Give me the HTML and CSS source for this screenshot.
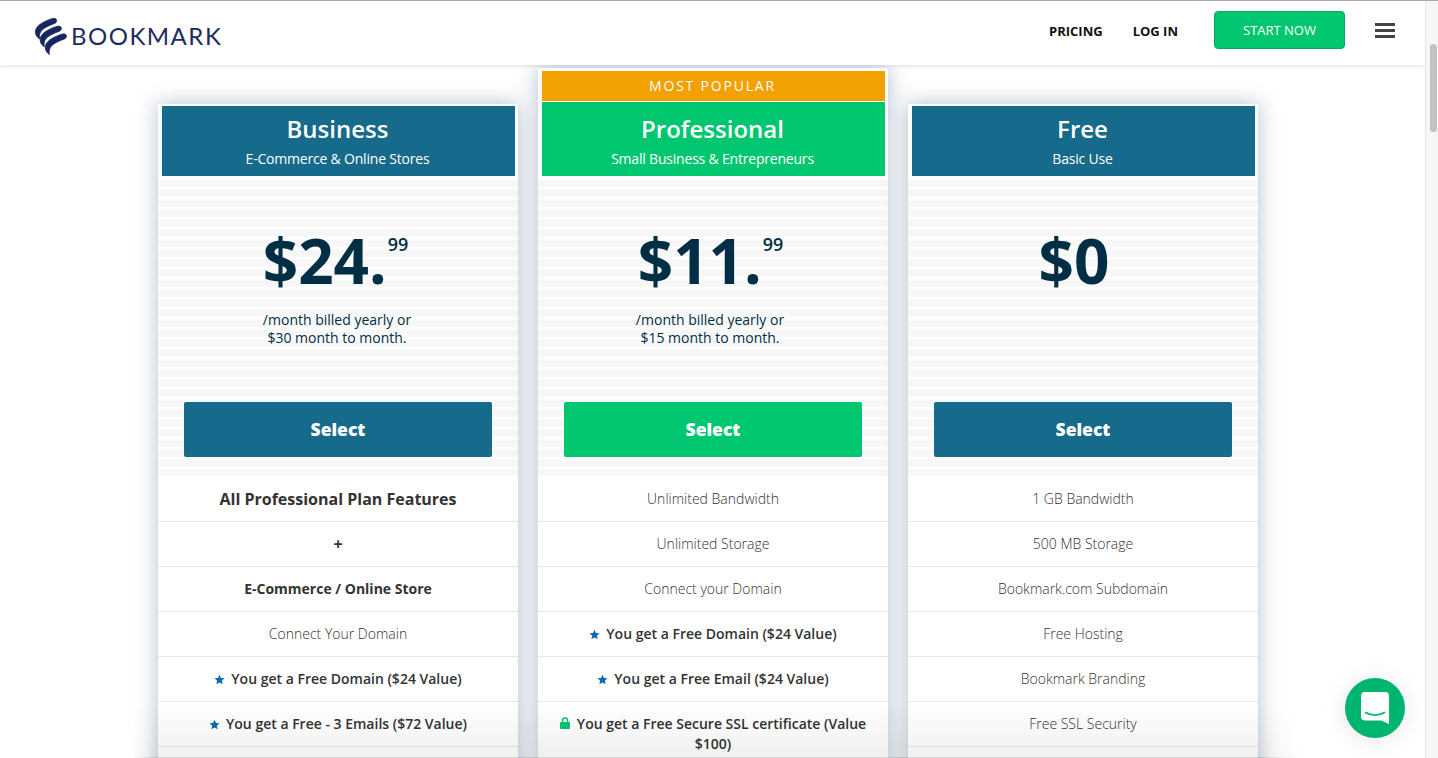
FILE: index.html
```html
<!DOCTYPE html>
<html lang="en">
<head>
    <meta charset="UTF-8">
    <meta name="viewport" content="width=device-width, initial-scale=1.0">
    <title>Bookmark Pricing</title>
    <link rel="stylesheet" href="styles.css">
</head>
<body>
    <svg class="icon-defs" width="0" height="0">
        <symbol id="star" viewBox="0 0 24 24"><path d="M12 1.500l3.200 7.200 7.800.8-5.900 5.200 1.800 7.800L12 18.400l-6.900 4.100 1.800-7.800L1 9.500l7.800-.8z"/></symbol>
        <symbol id="lock" viewBox="0 0 20 24"><path d="M2 10h1.500V7a6.500 6.500 0 0 1 13 0v3H18a2 2 0 0 1 2 2v10a2 2 0 0 1-2 2H2a2 2 0 0 1-2-2V12a2 2 0 0 1 2-2zm4.500 0h7V7a3.500 3.500 0 0 0-7 0z"/></symbol>
    </svg>
    <div class="window">
        <main class="page">
            <header class="header">
                <a class="logo" href="#">
                    <svg class="logo-mark" width="33" height="37" viewBox="0 0 33 37">
                        <path id="swoosh" d="M.5 14C.5 9 5 6 10 3.500C14 1.500 18 0 20 .5C22.500 1.500 22 4.500 19.500 5.500C14 7.500 8 10 5.500 14C4.500 16 4 18 4.500 21C2 19 .5 17 .5 14z"/>
                        <use href="#swoosh" x="4.700" y="7.800"/>
                        <use href="#swoosh" x="9.800" y="15.500"/>
                    </svg>
                    <span class="logo-text">BOOKMARK</span>
                </a>
                <nav class="nav">
                    <a href="#">PRICING</a>
                    <a href="#">LOG IN</a>
                    <a class="start-btn" href="#">START NOW</a>
                    <span class="burger"><i></i><i></i><i></i></span>
                </nav>
            </header>

            <div class="plans">
                <section class="plan plan-wide">
                    <div class="plan-head">
                        <h2>Business</h2>
                        <p>E-Commerce &amp; Online Stores</p>
                    </div>
                    <div class="plan-price">
                        <div class="price"><span>$24.</span><sup>99</sup></div>
                        <p class="billing">/month billed yearly or<br>$30 month to month.</p>
                        <a class="select-btn" href="#">Select</a>
                    </div>
                    <ul class="features">
                        <li class="lead">All Professional Plan Features</li>
                        <li class="lead">+</li>
                        <li class="strong">E-Commerce / Online Store</li>
                        <li>Connect Your Domain</li>
                        <li class="medium"><svg class="star"><use href="#star"/></svg>You get a Free Domain ($24 Value)</li>
                        <li class="medium"><svg class="star"><use href="#star"/></svg>You get a Free - 3 Emails ($72 Value)</li>
                        <li></li>
                    </ul>
                </section>

                <section class="plan plan-popular">
                    <div class="popular-tag">MOST POPULAR</div>
                    <div class="plan-head green">
                        <h2>Professional</h2>
                        <p>Small Business &amp; Entrepreneurs</p>
                    </div>
                    <div class="plan-price">
                        <div class="price"><span>$11.</span><sup>99</sup></div>
                        <p class="billing">/month billed yearly or<br>$15 month to month.</p>
                        <a class="select-btn green" href="#">Select</a>
                    </div>
                    <ul class="features">
                        <li>Unlimited Bandwidth</li>
                        <li>Unlimited Storage</li>
                        <li>Connect your Domain</li>
                        <li class="medium"><svg class="star"><use href="#star"/></svg>You get a Free Domain ($24 Value)</li>
                        <li class="medium"><svg class="star"><use href="#star"/></svg>You get a Free Email ($24 Value)</li>
                        <li class="medium"><svg class="lock"><use href="#lock"/></svg>You get a Free Secure SSL certificate (Value $100)</li>
                    </ul>
                </section>

                <section class="plan">
                    <div class="plan-head">
                        <h2>Free</h2>
                        <p>Basic Use</p>
                    </div>
                    <div class="plan-price">
                        <div class="price"><span>$0</span><sup class="no-cents"></sup></div>
                        <p class="billing"><br><br></p>
                        <a class="select-btn" href="#">Select</a>
                    </div>
                    <ul class="features">
                        <li>1 GB Bandwidth</li>
                        <li>500 MB Storage</li>
                        <li>Bookmark.com Subdomain</li>
                        <li>Free Hosting</li>
                        <li>Bookmark Branding</li>
                        <li>Free SSL Security</li>
                        <li></li>
                    </ul>
                </section>
            </div>

            <div class="bottom-fade"></div>

            <a class="chat" href="#">
                <svg width="28" height="32" viewBox="0 0 28 32">
                    <path fill="#fff" d="M4 0h20a4 4 0 0 1 4 4v28l-8-3.500H4a4 4 0 0 1-4-4V4a4 4 0 0 1 4-4z"/>
                    <path fill="none" stroke="#00b56f" stroke-width="1.700" stroke-linecap="round" d="M4.500 20.500c5.500 3.500 13.500 3.500 19 0"/>
                </svg>
            </a>
        </main>
        <div class="scrollbar"><div class="thumb"></div></div>
    </div>
</body>
</html>
```

FILE: styles.css
```css
* {
    box-sizing: border-box;
}
html, body {
    margin: 0;
    height: 100%;
    overflow: hidden;
}
body {
    font-family: "Open Sans", Arial, sans-serif;
    color: #333;
    background-color: #fff;
}
a {
    text-decoration: none;
    color: inherit;
}
.icon-defs {
    display: block;
    height: 0;
}
.window {
    display: flex;
    height: 758px;
    border-top: 1px solid #a8a8a8;
}
.page {
    flex: 1;
    position: relative;
    overflow: hidden;
    min-width: 0;
}
.scrollbar {
    width: 13px;
    padding: 43px 1px 0 4px;
    background-color: #f6f6f6;
    border-left: 1px solid #e6e6e6;
}
.thumb {
    height: 88px;
    border-radius: 4px;
    background-color: #c2c2c2;
}

/* header */
.header {
    position: relative;
    z-index: 2;
    height: 64px;
    padding: 0 30px 0 35px;
    display: flex;
    justify-content: space-between;
    align-items: center;
    background-color: #fff;
    box-shadow: 0 1px 4px rgba(0, 0, 0, 0.12);
}
.logo {
    display: flex;
    align-items: center;
    gap: 3px;
    margin-top: 7px;
}
.logo-mark {
    fill: #16275f;
    stroke: #16275f;
    stroke-width: 0.9;
}
.logo-text {
    font-family: Lato, sans-serif;
    font-size: 24px;
    letter-spacing: 1.5px;
    color: #1d2c60;
    margin-top: -3px;
}
.nav {
    display: flex;
    align-items: center;
    font-size: 13px;
    font-weight: 700;
    color: #111;
    margin-top: -4px;
}
.nav a {
    margin-right: 30px;
}
.nav .start-btn {
    margin: -2px 30px 0 6px;
    width: 131px;
    height: 38px;
    line-height: 36px;
    text-align: center;
    font-size: 13px;
    font-weight: 400;
    color: #fff;
    background-color: #00c76f;
    border: 1px solid #08a862;
    border-radius: 4px;
}
.burger {
    display: flex;
    flex-direction: column;
    gap: 3px;
    width: 20px;
    margin-top: -1px;
}
.burger i {
    display: block;
    height: 3px;
    background-color: #444;
}

/* plans */
.plans {
    display: flex;
    align-items: flex-start;
    gap: 20px;
    padding: 39px 0 0 158px;
}
.plan {
    width: 350px;
    background-color: #fff;
    box-shadow: 0 0 20px rgba(50, 85, 130, 0.38);
    padding-top: 2px;
}
.plan-wide {
    width: 360px;
}
.plan-popular {
    margin-top: -36px;
    padding-top: 3px;
}
.popular-tag {
    height: 30px;
    margin: 0 3px 1px 4px;
    padding-right: 2px;
    line-height: 30px;
    text-align: center;
    font-size: 14px;
    letter-spacing: 1.8px;
    color: #fff;
    background-color: #f2a100;
}
.plan-head {
    height: 70px;
    margin: 0 3px 0 4px;
    padding: 6px 2px 0 0;
    text-align: center;
    color: #fff;
    background-color: #166a8b;
}
.plan-head.green {
    height: 74px;
    padding-top: 10px;
    background-color: #00c76f;
}
.plan-head h2 {
    margin: 0;
    font-size: 24px;
    font-weight: 600;
    line-height: 34px;
}
.plan-head p {
    margin: 3px 0 0;
    font-size: 14px;
    letter-spacing: -0.2px;
    line-height: 20px;
}
.plan-price {
    height: 296px;
    margin-top: 4px;
    padding: 43px 26px 0;
    text-align: center;
    background: repeating-linear-gradient(#f7f7f7 0, #f7f7f7 6px, #fff 7.500px, #fff 9px, #f7f7f7 10px);
}
.price {
    display: flex;
    justify-content: center;
    height: 74px;
    font-size: 62px;
    font-weight: 700;
    line-height: 74px;
    color: #002f45;
}
.price sup {
    padding: 0 5px 0 1px;
    font-size: 18px;
    font-weight: 600;
    line-height: 24px;
    margin-top: 9px;
}
.price .no-cents {
    width: 18px;
    padding: 0;
}
.billing {
    margin: 14px 2px 0 0;
    font-size: 14px;
    line-height: 18px;
    color: #002f45;
}
.plan-popular .billing {
    margin-right: 6px;
}
.select-btn {
    display: block;
    height: 55px;
    margin-top: 55px;
    line-height: 55px;
    font-size: 17.500px;
    font-weight: 800;
    color: #fff;
    background-color: #166a8b;
    border-radius: 2px;
}
.select-btn.green {
    background-color: #00c76f;
}

/* feature rows */
.features {
    margin: 0;
    padding: 0;
    list-style: none;
    background-color: #fff;
}
.features li {
    min-height: 45px;
    padding: 12px 20px 10px;
    border-top: 1px solid #e6e7ec;
    text-align: center;
    font-size: 14px;
    font-weight: 300;
    line-height: 20px;
}
.features li:first-child {
    border-top: none;
    padding-top: 13px;
}
.features .lead {
    font-size: 16px;
    font-weight: 700;
}
.features .strong {
    font-weight: 700;
}
.features .medium {
    font-weight: 600;
}
.star {
    width: 11px;
    height: 11px;
    margin-right: 6px;
    fill: #0f69b4;
    vertical-align: -1px;
}
.lock {
    width: 10px;
    height: 12px;
    margin-right: 7px;
    fill: #00c76f;
}

/* grey fade along the bottom edge, over the cards */
.bottom-fade {
    position: absolute;
    z-index: 1;
    left: 0;
    right: 0;
    bottom: 0;
    height: 56px;
    background: linear-gradient(rgba(0, 0, 0, 0), rgba(0, 0, 0, 0.06));
    border-bottom: 1px solid rgba(0, 0, 0, 0.16);
    -webkit-mask-image: linear-gradient(90deg, transparent 130px, #000 160px, #000 1256px, transparent 1300px);
    mask-image: linear-gradient(90deg, transparent 130px, #000 160px, #000 1256px, transparent 1300px);
    pointer-events: none;
}

/* chat bubble */
.chat {
    position: absolute;
    z-index: 3;
    left: 1345px;
    top: 677px;
    width: 60px;
    height: 60px;
    border-radius: 50%;
    display: flex;
    align-items: center;
    justify-content: center;
    background-color: #00b56f;
    box-shadow: 0 2px 24px rgba(0, 0, 0, 0.1);
}
```
